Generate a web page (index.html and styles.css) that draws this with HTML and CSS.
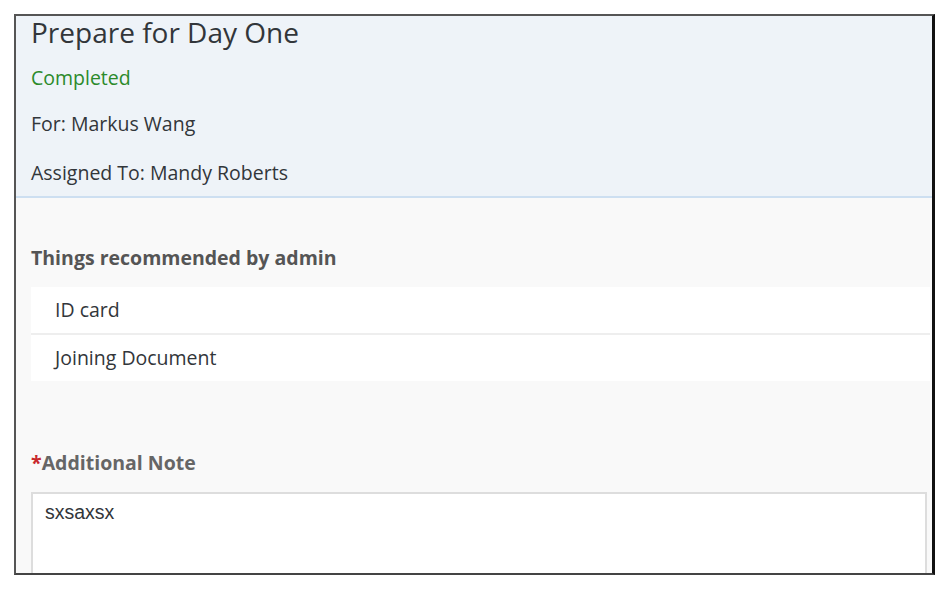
FILE: index.html
```html
<!DOCTYPE html>
<html lang="en">
<head>
    <meta charset="UTF-8">
    <meta name="viewport" content="width=device-width, initial-scale=1.0">
    <title>Prepare for Day One</title>
    <link rel="stylesheet" href="styles.css">
</head>
<body>
    <div class="frame">
        <div class="header">
            <h1>Prepare for Day One</h1>
            <div class="status">Completed</div>
            <div class="meta">For: Markus Wang</div>
            <div class="meta">Assigned To: Mandy Roberts</div>
        </div>
        <div class="content">
            <div class="section-title">Things recommended by admin</div>
            <ul class="items">
                <li>ID card</li>
                <li>Joining Document</li>
            </ul>
            <label class="note-label" for="note"><span class="req">*</span>Additional Note</label>
            <textarea id="note" class="note">sxsaxsx</textarea>
        </div>
    </div>
</body>
</html>
```

FILE: styles.css
```css
body {
    margin: 0;
    background-color: #fff;
    font-family: "Open Sans", "Liberation Sans", sans-serif;
    color: #32363a;
}
.frame {
    margin: 14px 0 0 14px;
    width: 916px;
    height: 557px;
    border-left: 2px solid #555;
    border-top: 2px solid #555;
    border-right: 3px solid #111;
    border-bottom: 2px solid #444;
    background-color: #f9f9f9;
    overflow: hidden;
}
.header {
    background-color: #eef3f8;
    border-bottom: 2px solid #cddff1;
    padding: 0 15px;
    height: 180px;
}
h1 {
    margin: 0;
    font-size: 28px;
    font-weight: normal;
    line-height: 33px;
}
.status {
    color: #2b8a2b;
    font-size: 19.5px;
    margin-top: 17px;
    line-height: 24px;
}
.meta {
    font-size: 19.5px;
    line-height: 24px;
    margin-top: 22px;
}
.meta + .meta {
    margin-top: 25px;
}
.content {
    padding: 48px 2px 0 15px;
}
.section-title {
    font-size: 19.5px;
    font-weight: bold;
    color: #555;
    line-height: 24px;
}
.items {
    list-style: none;
    margin: 17px 0 0;
    padding: 0;
}
.items li {
    background-color: #fff;
    font-size: 19.5px;
    line-height: 46px;
    padding-left: 24px;
}
.items li + li {
    border-top: 2px solid #eee;
}
.note-label {
    display: block;
    margin-top: 70px;
    font-size: 19.5px;
    font-weight: bold;
    color: #666;
    line-height: 24px;
}
.req {
    color: #c8282d;
}
.note {
    display: block;
    box-sizing: border-box;
    margin-top: 17px;
    width: 896px;
    height: 120px;
    border: 2px solid #ddd;
    background-color: #fff;
    padding: 7px 12px;
    font-family: "Liberation Sans", Arial, sans-serif;
    font-size: 19.5px;
    color: #32363a;
    resize: none;
}
```
